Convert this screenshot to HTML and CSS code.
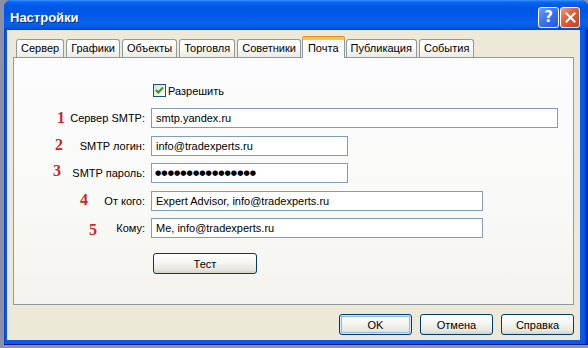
FILE: index.html
```html
<!DOCTYPE html>
<html lang="ru">
<head>
<meta charset="utf-8">
<title>Настройки</title>
<link rel="stylesheet" href="styles.css">
</head>
<body>
<div class="window">
  <div class="titlebar">
    <span class="title">Настройки</span>
    <div class="caption-buttons">
      <span class="cap-btn help">?</span>
      <span class="cap-btn close">
        <svg width="11" height="11" viewBox="0 0 11 11"><path d="M1.5 1.5 L9.5 9.5 M9.5 1.5 L1.5 9.5" stroke="#fff" stroke-width="2" stroke-linecap="square"/></svg>
      </span>
    </div>
  </div>
  <div class="client">
    <div class="tabs">
      <span class="tab">Сервер</span>
      <span class="tab">Графики</span>
      <span class="tab">Объекты</span>
      <span class="tab">Торговля</span>
      <span class="tab">Советники</span>
      <span class="tab active">Почта</span>
      <span class="tab">Публикация</span>
      <span class="tab">События</span>
    </div>
    <div class="panel">
      <div class="form">
        <div class="check-row">
          <span class="checkbox">
            <svg width="11" height="11" viewBox="0 0 11 11"><path d="M2 5 L4.3 7.5 L9 2.5" fill="none" stroke="#21a121" stroke-width="2"/></svg>
          </span>
          <span>Разрешить</span>
        </div>
        <div class="row">
          <span class="num n1">1</span>
          <span class="lbl">Сервер SMTP:</span>
          <div class="field w-long">smtp.yandex.ru</div>
        </div>
        <div class="row">
          <span class="num n2">2</span>
          <span class="lbl">SMTP логин:</span>
          <div class="field w-short">info@tradexperts.ru</div>
        </div>
        <div class="row">
          <span class="num n3">3</span>
          <span class="lbl">SMTP пароль:</span>
          <div class="field w-short dots">●●●●●●●●●●●●●●●●</div>
        </div>
        <div class="row">
          <span class="num n4">4</span>
          <span class="lbl">От кого:</span>
          <div class="field w-mid">Expert Advisor, info@tradexperts.ru</div>
        </div>
        <div class="row">
          <span class="num n5">5</span>
          <span class="lbl">Кому:</span>
          <div class="field w-mid">Me, info@tradexperts.ru</div>
        </div>
        <div class="test-row">
          <button class="btn test">Тест</button>
        </div>
      </div>
    </div>
    <div class="footer">
      <button class="btn default">OK</button>
      <button class="btn">Отмена</button>
      <button class="btn">Справка</button>
    </div>
  </div>
</div>
</body>
</html>
```

FILE: styles.css
```css
* { box-sizing: border-box; }
html, body { margin: 0; padding: 0; }
body {
  background: #8e90a8;
  width: 588px;
  height: 348px;
  overflow: hidden;
  font-family: "Liberation Sans", Arial, sans-serif;
  font-size: 11px;
  color: #000;
}
.window {
  margin-left: 4px;
  width: 584px;
  height: 345px;
  border-radius: 7px 7px 0 0;
  background: linear-gradient(90deg, #0831b8 0, #0a55e0 1px, #0a58e4 3px, #0a58e4 calc(100% - 4px), #0640c8 calc(100% - 2px), #001a90 100%);
  display: flex;
  flex-direction: column;
  overflow: hidden;
  box-shadow: inset 0 -1px 0 #001a90;
}
.titlebar {
  height: 30px;
  flex: none;
  display: flex;
  align-items: center;
  padding: 4px 0 0 6px;
  border-radius: 7px 7px 0 0;
  background: linear-gradient(#3d93ff 0, #0a66f4 2px, #0058e8 6px, #0056e6 14px, #0a62f0 22px, #0559e8 27px, #0048d0 30px);
}
.title {
  flex: 1;
  color: #fff;
  font-weight: bold;
  font-size: 13px;
  text-shadow: 1px 1px 0 #0a2a8c;
}
.caption-buttons {
  display: flex;
  gap: 1px;
  margin-right: 8px;
}
.cap-btn {
  width: 21px;
  height: 21px;
  border: 1px solid #fff;
  border-radius: 3px;
  display: flex;
  align-items: center;
  justify-content: center;
}
.help {
  background: linear-gradient(135deg, #6f9ffc 0, #3c74f0 45%, #2457dc 100%);
  color: #fff;
  font-weight: bold;
  font-size: 15px;
  font-family: "DejaVu Sans", sans-serif;
}
.close {
  width: 20px;
  background: linear-gradient(135deg, #f0a080 0, #e0623a 40%, #c8401a 100%);
}
.client {
  flex: 1;
  margin: 0 8px 5px 3px;
  background: #ece9d8;
  padding-top: 7px;
  display: flex;
  flex-direction: column;
}
.tabs {
  display: flex;
  align-items: flex-end;
  padding-left: 9px;
  position: relative;
  z-index: 2;
}
.tab {
  height: 18px;
  line-height: 17px;
  padding: 0 4px;
  margin-right: 2px;
  border: 1px solid #919b9c;
  border-bottom: none;
  border-radius: 3px 3px 0 0;
  background: linear-gradient(#ffffff, #fcfcfb 40%, #ecebe6);
  white-space: nowrap;
}
.tab.active {
  height: 21px;
  margin: 0 1px -1px -1px;
  padding: 0 5px;
  line-height: 16px;
  background: #fcfcfe;
  border-top: 3px solid #ffc83c;
  box-shadow: 0 -1px 0 #e68b2c;
  border-radius: 2px 2px 0 0;
}
.panel {
  margin: 0 6px;
  height: 248px;
  border: 1px solid #919b9c;
  background: linear-gradient(#fcfcfe, #f9f9f7 60%, #f4f3ee);
  padding-top: 26px;
}
.form {
  display: flex;
  flex-direction: column;
  gap: 7.5px;
}
.check-row {
  display: flex;
  align-items: center;
  gap: 2px;
  height: 13px;
  margin-left: 139px;
  margin-bottom: 3.5px;
}
.checkbox {
  width: 13px;
  height: 13px;
  border: 1px solid #1c5180;
  background: linear-gradient(135deg, #dcdcd7, #ffffff);
  display: flex;
  align-items: center;
  justify-content: center;
}
.row {
  position: relative;
  display: flex;
  align-items: center;
  height: 20px;
}
.lbl {
  width: 131px;
  margin-right: 6px;
  text-align: right;
}
.field {
  height: 20px;
  border: 1px solid #7f9db9;
  background: #fff;
  padding: 0 4px;
  line-height: 18px;
  white-space: nowrap;
  overflow: hidden;
}
.w-long { width: 407px; }
.w-short { width: 197px; }
.w-mid { width: 332px; }
.dots {
  font-size: 7.2px;
  letter-spacing: 0.05px;
  font-family: "DejaVu Sans", sans-serif;
  padding-left: 3px;
}
.num {
  position: absolute;
  top: 0;
  font-family: "Liberation Serif", "Times New Roman", serif;
  font-weight: bold;
  font-size: 16px;
  line-height: 20px;
  color: #c8282a;
}
.n1 { left: 43px; }
.n2 { left: 41px; top: -1px; }
.n3 { left: 39px; top: -2px; }
.n4 { left: 66px; top: -1px; }
.n5 { left: 75px; top: 2px; }
.test-row {
  margin: 7.5px 0 0 139px;
}
.btn {
  height: 21px;
  border: 1px solid #003c74;
  border-radius: 3px;
  background: linear-gradient(#ffffff, #f5f5f1 45%, #e6e5de 85%, #d6d0c5);
  font-family: "Liberation Sans", Arial, sans-serif;
  font-size: 11px;
  color: #000;
  padding: 0;
  width: 73px;
}
.btn.test { width: 104px; }
.btn.default {
  box-shadow: inset 0 0 0 1px #cee7ff, inset 0 0 0 2px #98b8ea;
}
.footer {
  display: flex;
  justify-content: flex-end;
  gap: 8px;
  margin: 9px 6px 0 0;
}
```
